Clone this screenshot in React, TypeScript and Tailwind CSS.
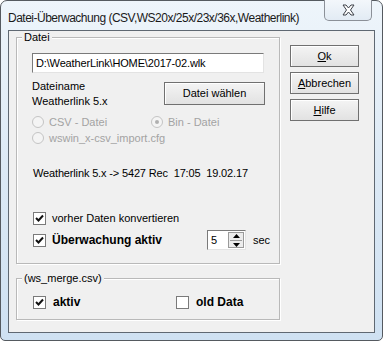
import React from 'react';

const ui = { fontFamily: '"Liberation Sans", Arial, sans-serif' };

function Check({ checked = false }: { checked?: boolean }) {
    return (
        <span className="w-[13px] h-[13px] border border-[#7a7a7a] bg-white flex items-center justify-center shrink-0">
            {checked && (
                <svg width="9" height="9" viewBox="0 0 9 9">
                    <path d="M1 4 L3.5 6.5 L8 1.5" stroke="#111" strokeWidth="2" fill="none" />
                </svg>
            )}
        </span>
    );
}

function Radio({ selected = false }: { selected?: boolean }) {
    return (
        <span className="w-[12px] h-[12px] rounded-full border border-[#c4c4c4] bg-[#f4f4f4] flex items-center justify-center shrink-0">
            {selected && <span className="w-[4px] h-[4px] rounded-full bg-[#b0b0b0]" />}
        </span>
    );
}

function Btn({ children, className = '' }: { children: React.ReactNode; className?: string }) {
    return (
        <div className={`border border-[#707070] bg-gradient-to-b from-[#f4f4f4] to-[#e2e2e2] shadow-[inset_1px_1px_0_#fff] flex items-center justify-center text-[11px] text-black ${className}`}>
            {children}
        </div>
    );
}

export default function App() {
    return (
        <div className="w-[383px] h-[341px] bg-white" style={ui}>
            <div className="w-[383px] h-[341px] rounded-t-[7px] rounded-b-[5px] border border-[#555a60] bg-gradient-to-b from-[#eef5fb] via-[#dce9f5] to-[#cfe1f2] flex flex-col">
                {/* Title bar */}
                <div className="h-[29px] flex items-start relative">
                    <span className="pl-[7px] pt-[8px] text-[12px] text-[#1a1a1a] whitespace-nowrap tracking-[-0.5px]">
                        Datei-Überwachung (CSV,WS20x/25x/23x/36x,Weatherlink)
                    </span>
                    <div className="absolute left-[323px] top-[-1px] w-[48px] h-[21px] border border-[#8b9098] border-t-0 rounded-b-[5px] bg-gradient-to-b from-[#f3f7fb] to-[#e2ebf4] flex items-center justify-center">
                        <svg width="15" height="12" viewBox="0 0 15 12">
                            <path d="M2 1 H5 L7.5 4 L10 1 H13 L9.5 6 L13 11 H10 L7.5 8 L5 11 H2 L5.5 6 Z" fill="#fff" stroke="#3c4048" strokeWidth="1" strokeLinejoin="round" />
                        </svg>
                    </div>
                </div>

                {/* Client area */}
                <div className="mx-[7px] h-[303px] border border-[#5f6872] bg-[#f0f0f0] flex pl-[7px]">
                    <div className="w-[264px] flex flex-col pt-[6px]">
                        {/* Datei group */}
                        <div className="h-[227px] border border-[#b9b9b9] shadow-[inset_1px_1px_0_#fff,1px_1px_0_#fff] flex flex-col">
                            <span className="-mt-[7px] ml-[5px] px-[2px] w-fit h-[13px] leading-[13px] text-[11px] bg-[#f0f0f0] text-black">Datei</span>
                            <div className="mt-[9px] ml-[15px] w-[232px] h-[20px] border border-t-[#7a7a7a] border-l-[#7a7a7a] border-r-[#e3e3e3] border-b-[#e3e3e3] bg-white flex items-center pl-[3px] text-[11px] text-black tracking-[-0.15px]">
                                D:\WeatherLink\HOME\2017-02.wlk
                            </div>
                            <div className="mt-[6px] ml-[15px] flex h-[30px]">
                                <div className="w-[132px] flex flex-col text-[11px] text-black">
                                    <span className="h-[15px] leading-[15px]">Dateiname</span>
                                    <span className="h-[15px] leading-[15px]">Weatherlink 5.x</span>
                                </div>
                                <Btn className="mt-[3px] w-[101px] h-[23px]">Datei wählen</Btn>
                            </div>
                            <div className="mt-[5px] ml-[15px] flex h-[16px] items-center text-[11px] text-[#a3a3a3]">
                                <div className="w-[119px] flex items-center gap-[5px]">
                                    <Radio />
                                    <span>CSV - Datei</span>
                                </div>
                                <div className="flex items-center gap-[5px]">
                                    <Radio selected />
                                    <span>Bin - Datei</span>
                                </div>
                            </div>
                            <div className="ml-[15px] flex h-[16px] items-center gap-[5px] text-[11px] text-[#a3a3a3]">
                                <Radio />
                                <span>wswin_x-csv_import.cfg</span>
                            </div>
                            <div className="mt-[19px] ml-[16px] h-[16px] flex items-center text-[11px] text-black whitespace-pre tracking-[-0.15px]">
                                Weatherlink 5.x -&gt; 5427 Rec  17:05  19.02.17
                            </div>
                            <div className="mt-[29px] ml-[16px] h-[16px] flex items-center gap-[6px] text-[11px] text-black">
                                <Check checked />
                                <span>vorher Daten konvertieren</span>
                            </div>
                            <div className="mt-[4px] ml-[16px] h-[20px] flex items-center text-[11px] text-black">
                                <div className="w-[174px] flex items-center gap-[6px]">
                                    <Check checked />
                                    <span className="font-bold text-[12px]">Überwachung aktiv</span>
                                </div>
                                <div className="w-[39px] h-[20px] border border-t-[#7a7a7a] border-l-[#7a7a7a] border-r-[#e3e3e3] border-b-[#e3e3e3] bg-white flex">
                                    <span className="flex-1 pl-[3px] leading-[18px]">5</span>
                                    <div className="w-[16px] my-[1px] mr-[1px] border border-[#9a9a9a] bg-[#ececec] flex flex-col items-center justify-center gap-[2px]">
                                        <svg width="7" height="4" viewBox="0 0 7 4"><path d="M0 4 L3.5 0 L7 4 Z" fill="#000" /></svg>
                                        <span className="w-[12px] h-px bg-[#9a9a9a]" />
                                        <svg width="7" height="4" viewBox="0 0 7 4"><path d="M0 0 L3.5 4 L7 0 Z" fill="#000" /></svg>
                                    </div>
                                </div>
                                <span className="ml-[7px]">sec</span>
                            </div>
                        </div>

                        {/* ws_merge group */}
                        <div className="mt-[14px] h-[42px] border border-[#b9b9b9] shadow-[inset_1px_1px_0_#fff,1px_1px_0_#fff] flex flex-col">
                            <span className="-mt-[7px] ml-[5px] px-[2px] w-fit h-[13px] leading-[13px] text-[11px] bg-[#f0f0f0] text-black">(ws_merge.csv)</span>
                            <div className="mt-[9px] ml-[16px] h-[16px] flex items-center text-[12px] font-bold text-black">
                                <div className="w-[143px] flex items-center gap-[7px]">
                                    <Check checked />
                                    <span>aktiv</span>
                                </div>
                                <div className="flex items-center gap-[7px]">
                                    <Check />
                                    <span>old Data</span>
                                </div>
                            </div>
                        </div>
                    </div>

                    {/* Buttons */}
                    <div className="ml-[10px] pt-[14px] flex flex-col gap-[5px]">
                        <Btn className="w-[69px] h-[22px]"><span><u>O</u>k</span></Btn>
                        <Btn className="w-[69px] h-[22px]"><span><u>A</u>bbrechen</span></Btn>
                        <Btn className="w-[69px] h-[22px]"><span><u>H</u>ilfe</span></Btn>
                    </div>
                </div>
            </div>
        </div>
    );
}
